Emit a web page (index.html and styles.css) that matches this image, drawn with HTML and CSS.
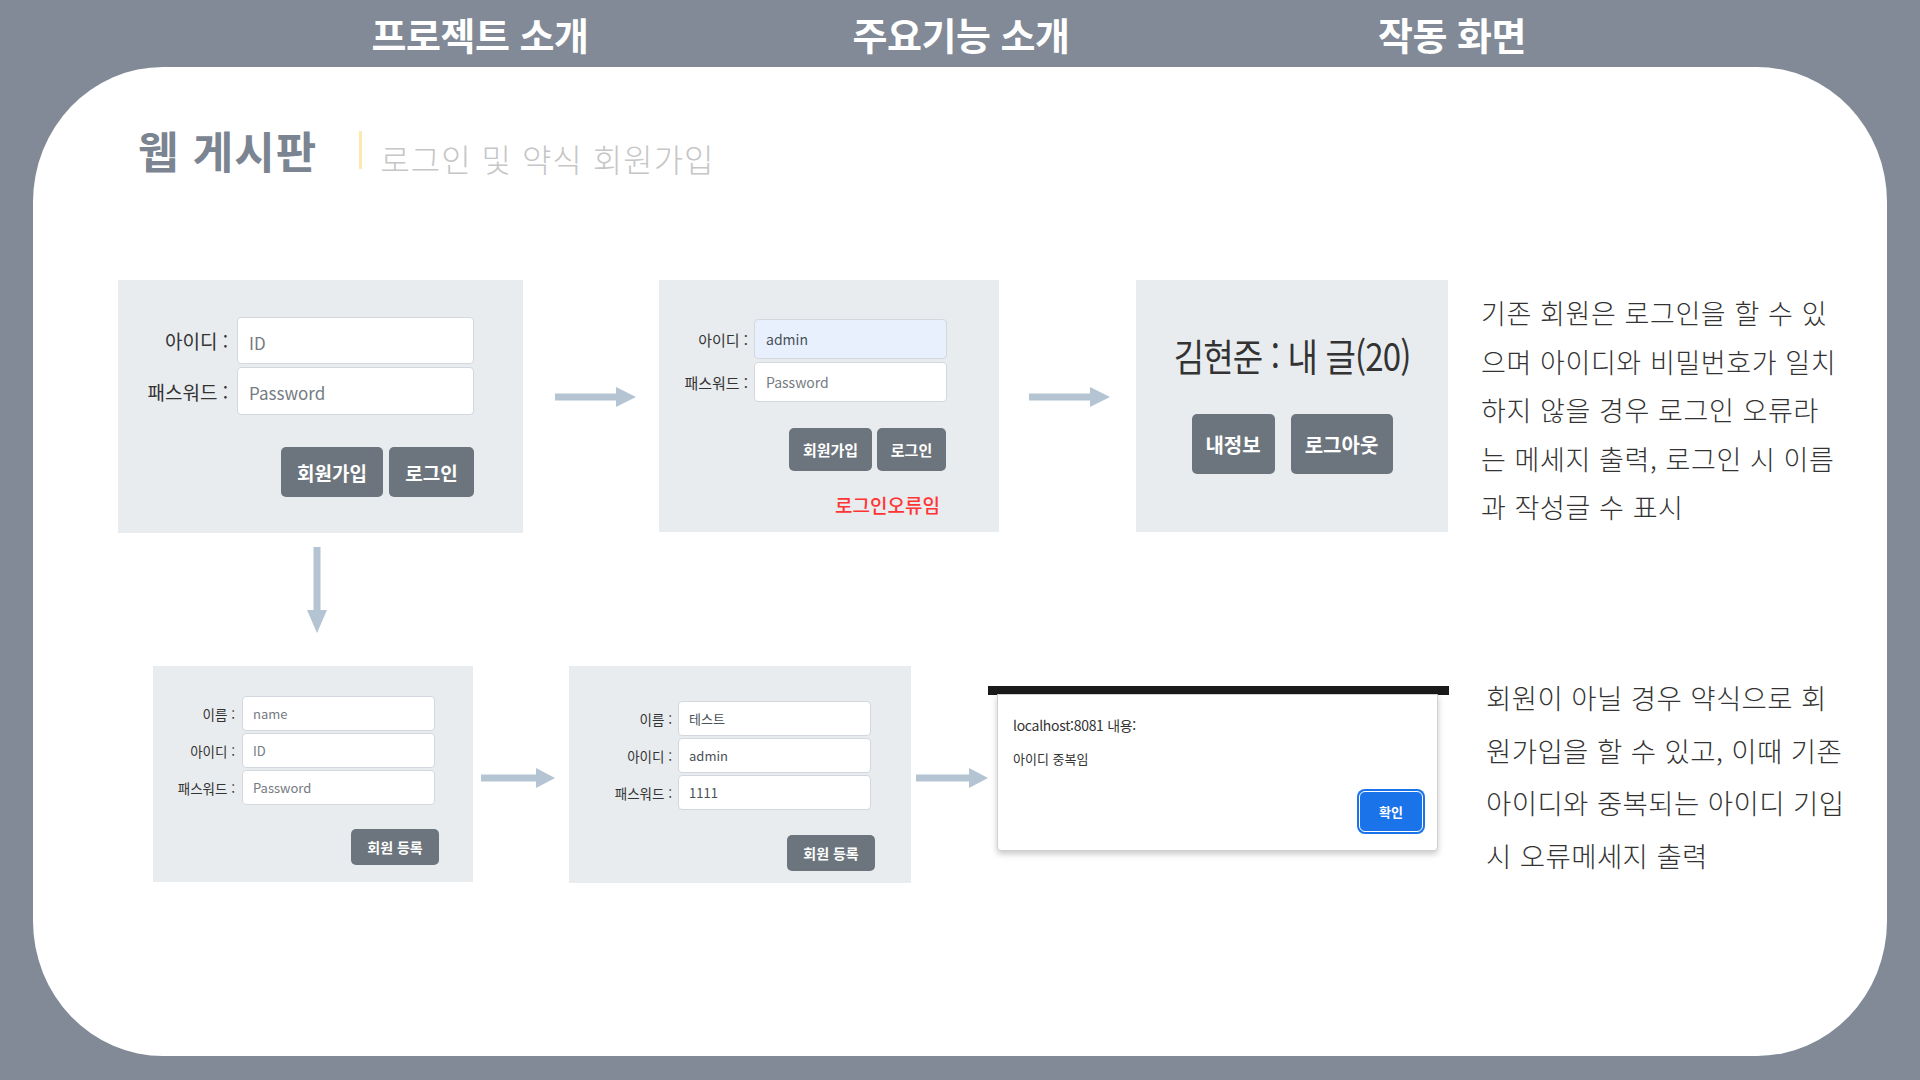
FILE: index.html
```html
<!DOCTYPE html>
<html lang="ko">
<head>
<meta charset="utf-8">
<title>웹 게시판 - 작동 화면</title>
<link rel="stylesheet" href="styles.css">
</head>
<body>
<nav class="nav">
  <div class="nav-item">프로젝트 소개</div>
  <div class="nav-item">주요기능 소개</div>
  <div class="nav-item nav-last">작동 화면</div>
</nav>
<main class="card">
  <div class="title-row">
    <h1 class="title">웹 게시판</h1>
    <span class="title-bar"></span>
    <span class="subtitle">로그인 및 약식 회원가입</span>
  </div>

  <div class="row row1">
    <section class="panel p1">
      <div class="form f1">
        <label>아이디 :</label><div class="input ph">ID</div>
        <label>패스워드 :</label><div class="input ph">Password</div>
      </div>
      <div class="btns b1"><span class="btn">회원가입</span><span class="btn">로그인</span></div>
    </section>
    <svg class="harrow a1" width="81" height="22" viewBox="0 0 81 22"><rect x="0" y="7.5" width="62" height="7" fill="#b4c4d3"/><polygon points="61,1 81,11 61,21" fill="#b4c4d3"/></svg>
    <section class="panel p2">
      <div class="form f2">
        <label>아이디 :</label><div class="input filled auto">admin</div>
        <label>패스워드 :</label><div class="input ph">Password</div>
      </div>
      <div class="btns b2"><span class="btn">회원가입</span><span class="btn">로그인</span></div>
      <div class="err">로그인오류임</div>
    </section>
    <svg class="harrow a2" width="81" height="22" viewBox="0 0 81 22"><rect x="0" y="7.5" width="62" height="7" fill="#b4c4d3"/><polygon points="61,1 81,11 61,21" fill="#b4c4d3"/></svg>
    <section class="panel p3">
      <div class="user"><span class="user-text">김현준 : 내 글(20)</span></div>
      <div class="btns b3"><span class="btn">내정보</span><span class="btn">로그아웃</span></div>
    </section>
    <p class="desc d1">기존 회원은 로그인을 할 수 있<br>으며 아이디와 비밀번호가 일치<br>하지 않을 경우 로그인 오류라<br>는 메세지 출력, 로그인 시 이름<br>과 작성글 수 표시</p>
  </div>

  <svg class="varrow" width="22" height="86" viewBox="0 0 22 86"><rect x="7.5" y="0" width="7" height="64" fill="#b4c4d3"/><polygon points="1,63 21,63 11,86" fill="#b4c4d3"/></svg>

  <div class="row row2">
    <section class="panel p4">
      <div class="form f4">
        <label>이름 :</label><div class="input ph">name</div>
        <label>아이디 :</label><div class="input ph">ID</div>
        <label>패스워드 :</label><div class="input ph">Password</div>
      </div>
      <div class="btns b4"><span class="btn">회원 등록</span></div>
    </section>
    <svg class="harrow a3" width="74" height="22" viewBox="0 0 74 22"><rect x="0" y="7.5" width="56" height="7" fill="#b4c4d3"/><polygon points="55,1 74,11 55,21" fill="#b4c4d3"/></svg>
    <section class="panel p5">
      <div class="form f5">
        <label>이름 :</label><div class="input filled">테스트</div>
        <label>아이디 :</label><div class="input filled">admin</div>
        <label>패스워드 :</label><div class="input filled">1111</div>
      </div>
      <div class="btns b5"><span class="btn">회원 등록</span></div>
    </section>
    <svg class="harrow a4" width="72" height="22" viewBox="0 0 72 22"><rect x="0" y="7.5" width="54" height="7" fill="#b4c4d3"/><polygon points="53,1 72,11 53,21" fill="#b4c4d3"/></svg>
    <div class="alert-wrap">
      <div class="alert-bar"></div>
      <div class="alert">
        <div class="alert-host">localhost:8081 내용:</div>
        <div class="alert-msg">아이디 중복임</div>
        <div class="alert-foot"><span class="alert-ok">확인</span></div>
      </div>
    </div>
    <p class="desc d2">회원이 아닐 경우 약식으로 회<br>원가입을 할 수 있고, 이때 기존<br>아이디와 중복되는 아이디 기입<br>시 오류메세지 출력</p>
  </div>
</main>
</body>
</html>
```
FILE: styles.css
```css
* { box-sizing: border-box; }
html, body { margin: 0; padding: 0; }
body {
  width: 1920px;
  height: 1080px;
  overflow: hidden;
  background: #818a96;
  font-family: "Noto Sans CJK KR", "Noto Sans", sans-serif;
  color: #333;
}

.nav {
  height: 67px;
  display: grid;
  grid-template-columns: 300px 300px 300px;
  column-gap: 181px;
  padding-left: 330px;
}
.nav-item {
  text-align: center;
  color: #fff;
  font-weight: 700;
  font-size: 38px;
  line-height: 67px;
  letter-spacing: -0.5px;
}
.nav-last { margin-left: 20px; }

.card {
  margin: 0 33px;
  height: 989px;
  background: #fff;
  border-radius: 130px / 135px;
  overflow: hidden;
}

.title-row {
  display: flex;
  align-items: center;
  height: 50px;
  margin: 0 0 0 105px;
  position: relative;
  top: 58px;
}
.title {
  margin: 0;
  font-size: 44px;
  font-weight: 700;
  color: #7b8491;
  line-height: 50px;
  letter-spacing: 1px;
}
.title-bar {
  width: 3px;
  height: 38px;
  background: #fde9b0;
  margin-left: 42px;
}
.subtitle {
  margin-left: 18px;
  font-size: 32px;
  font-weight: 300;
  color: #c6c6c6;
  margin-top: 16px;
  letter-spacing: 1px;
}

.row { display: flex; align-items: flex-start; }
.row1 { margin: 163px 0 0 85px; }

.panel { background: #e9ecef; flex: none; }
.p1 { width: 405px; height: 253px; padding-top: 37px; }
.p2 { width: 340px; height: 252px; padding-top: 39px; margin-left: 23px; }
.p3 { width: 312px; height: 252px; margin-left: 26px; display: flex; flex-direction: column; align-items: center; }
.p4 { width: 320px; height: 216px; padding-top: 30px; }
.p5 { width: 342px; height: 217px; padding-top: 35px; margin-left: 14px; }

.harrow { flex: none; display: block; }
.a1 { margin: 106px 0 0 32px; }
.a2 { margin: 106px 0 0 30px; }
.a3 { margin: 101px 0 0 8px; }
.a4 { margin: 101px 0 0 5px; }

.form { display: grid; align-items: stretch; }
.form label { text-align: right; color: #333; white-space: nowrap; align-self: center; }
.input {
  background: #fff;
  border: 1px solid #d3d8de;
  border-radius: 4px;
  display: flex;
  align-items: center;
  color: #495057;
}
.input.ph { color: #757b82; }
.input.auto { background: #e8f0fe; }

.f1 { grid-template-columns: 110px 237px; column-gap: 9px; row-gap: 3px; grid-template-rows: 47px 48px; width: 356px; }
.f1 label { font-size: 19px; }
.f1 .input { font-size: 17px; padding-left: 11px; padding-top: 3px; }

.f2 { grid-template-columns: 89px 193px; column-gap: 6px; row-gap: 3px; grid-template-rows: 40px 40px; width: 288px; }
.f2 label { font-size: 15px; }
.f2 .input { font-size: 14px; padding-left: 11px; }

.f4 { grid-template-columns: 82px 193px; column-gap: 7px; row-gap: 2px; grid-template-rows: 35px 35px 35px; width: 282px; }
.f4 label { font-size: 13.5px; }
.f4 .input { font-size: 13px; padding-left: 10px; }

.f5 { grid-template-columns: 103px 193px; column-gap: 6px; row-gap: 2px; grid-template-rows: 35px 35px 35px; width: 302px; }
.f5 label { font-size: 13.5px; }
.f5 .input { font-size: 13px; padding-left: 10px; }

.btns { display: flex; justify-content: flex-end; }
.btn {
  background: #6c757d;
  color: #fff;
  font-weight: 700;
  border-radius: 5px;
  display: flex;
  align-items: center;
  justify-content: center;
  white-space: nowrap;
}
.b1 { width: 356px; gap: 6px; margin-top: 32px; }
.b1 .btn { height: 50px; font-size: 19px; }
.b1 .btn:first-child { width: 102px; }
.b1 .btn:last-child { width: 85px; }

.b2 { width: 287px; gap: 5px; margin-top: 26px; }
.b2 .btn { height: 43px; font-size: 15px; }
.b2 .btn:first-child { width: 83px; }
.b2 .btn:last-child { width: 69px; }

.err {
  width: 281px;
  text-align: right;
  color: #ff3434;
  font-size: 19px;
  line-height: 22px;
  margin-top: 23px;
  font-weight: 500;
}

.user { margin-top: 52px; height: 46px; line-height: 46px; }
.user-text {
  display: inline-block;
  font-size: 38px;
  color: #333;
  transform: scaleX(0.87);
  white-space: nowrap;
  letter-spacing: -1px;
}
.b3 { gap: 16px; margin-top: 36px; }
.b3 .btn { height: 60px; font-size: 20px; }
.b3 .btn:first-child { width: 83px; }
.b3 .btn:last-child { width: 102px; }

.b4 { width: 286px; margin-top: 24px; }
.b4 .btn, .b5 .btn { width: 88px; height: 36px; font-size: 14px; }
.b5 { width: 306px; margin-top: 25px; }

.desc {
  margin: 0;
  flex: none;
  font-weight: 300;
  color: #333;
  white-space: nowrap;
}
.d1 { margin: 9px 0 0 33px; font-size: 27px; line-height: 48.5px; letter-spacing: 0.6px; }
.d2 { margin: 5px 0 0 37px; font-size: 27.5px; line-height: 52.5px; letter-spacing: 0.4px; }

.varrow { display: block; margin: 14px 0 0 273px; }

.row2 { margin: 33px 0 0 120px; }

.alert-wrap { width: 461px; margin-top: 20px; flex: none; }
.alert-bar { height: 9px; background: #1a1a1a; }
.alert {
  margin: -1px 11px 0 9px;
  height: 157px;
  background: #fff;
  border: 1px solid #d0d0d0;
  border-radius: 0 0 4px 4px;
  box-shadow: 0 3px 6px rgba(0,0,0,0.22);
  padding: 20px 14px 0 15px;
}
.alert-host { font-size: 14px; color: #333; line-height: 20px; letter-spacing: -0.3px; }
.alert-msg { font-size: 13px; color: #333; line-height: 20px; margin-top: 14px; }
.alert-foot { display: flex; justify-content: flex-end; margin-top: 22px; }
.alert-ok {
  width: 64px;
  height: 41px;
  background: #1a73e8;
  border: 1.5px solid #fff;
  box-shadow: 0 0 0 2px #1a73e8;
  border-radius: 6px;
  color: #fff;
  font-size: 13px;
  font-weight: 700;
  display: flex;
  align-items: center;
  justify-content: center;
}
```
